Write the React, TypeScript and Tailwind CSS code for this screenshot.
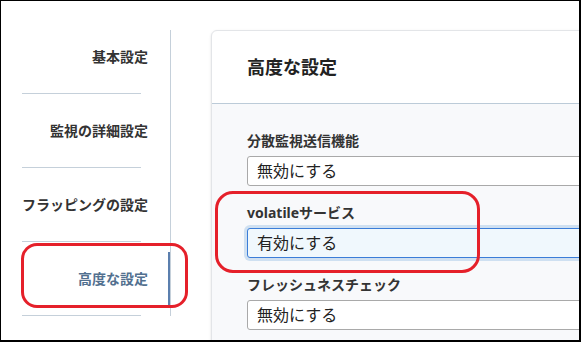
const menu = [
  { label: "基本設定", active: false },
  { label: "監視の詳細設定", active: false },
  { label: "フラッピングの設定", active: false },
  { label: "高度な設定", active: true },
];

const fields = [
  { label: "分散監視送信機能", value: "無効にする", focus: false },
  { label: "volatileサービス", value: "有効にする", focus: true },
  { label: "フレッシュネスチェック", value: "無効にする", focus: false },
];

export default function App() {
  return (
    <div
      className="relative h-[342px] w-[581px] overflow-hidden border-t border-l border-r-2 border-b-2 border-black bg-white text-[#333]"
      style={{ fontFamily: '"Noto Sans", "Noto Sans CJK JP", sans-serif' }}
    >
      <div className="flex items-start">
        {/* sidebar */}
        <div className="mt-[29px] w-[170px] shrink-0 border-r border-[#c5d0da]">
          <ul className="-mt-[10px]">
            {menu.map((m) => (
              <li key={m.label}>
                <a
                  className={`flex h-[73px] items-center justify-end text-[14px] font-bold ${
                    m.active ? "text-[#52708f]" : "text-[#333]"
                  }`}
                >
                  <span>{m.label}</span>
                  <span
                    className={`ml-[20px] h-[54px] w-[2px] ${
                      m.active ? "bg-[#5b7fae]" : "bg-transparent"
                    }`}
                  />
                </a>
                <div className="ml-[21px] h-px w-[119px] bg-[#c5d0da]" />
              </li>
            ))}
          </ul>
        </div>

        {/* card */}
        <div className="ml-[40px] mt-[29px] w-[420px] shrink-0 overflow-hidden rounded-[6px] border border-[#e3e5e8] bg-white shadow-sm">
          <div className="flex h-[73px] items-center border-b border-[#bccbd8] pl-[35px]">
            <h2 className="text-[18px] font-bold text-[#222]">高度な設定</h2>
          </div>
          <div className="bg-[#f8f9fb] pl-[35px] pt-[27px] pb-[20px]">
            {fields.map((f) => (
              <div key={f.label} className="mb-[17px]">
                <div className="mb-[5px] h-[20px] text-[14px] font-bold leading-[20px] text-[#333]">
                  {f.label}
                </div>
                <div
                  className={`flex h-[30px] w-[400px] items-center rounded-[3px] border pl-[9px] text-[16px] text-[#222] ${
                    f.focus
                      ? "border-[#3b7dd8] bg-[#f0f8fd] shadow-[0_0_0_3px_#cfe0f1]"
                      : "border-[#a9a9a9] bg-white"
                  }`}
                >
                  {f.value}
                </div>
              </div>
            ))}
          </div>
        </div>
      </div>

      {/* red annotations */}
      <div className="pointer-events-none absolute left-[20px] top-[242px] h-[65px] w-[167px] rounded-[16px] border-[3px] border-[#e5202a]" />
      <div className="pointer-events-none absolute left-[214px] top-[190px] h-[82px] w-[265px] rounded-[18px] border-[3px] border-[#e5202a]" />
    </div>
  );
}
